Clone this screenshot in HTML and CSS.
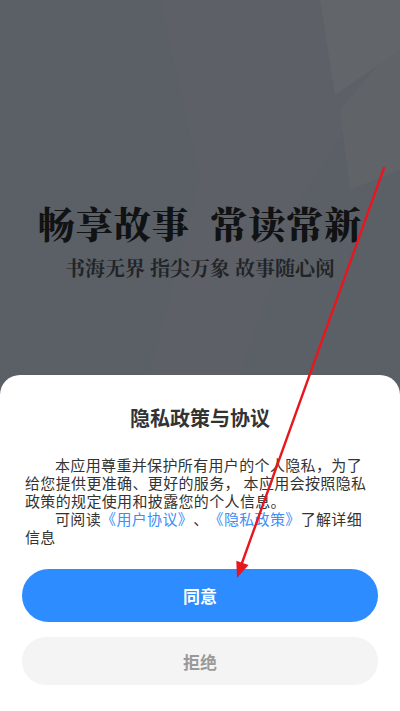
FILE: index.html
```html
<!DOCTYPE html>
<html lang="zh-CN">
<head>
<meta charset="utf-8">
<title>隐私政策与协议</title>
<link rel="stylesheet" href="styles.css">
</head>
<body>
<div class="screen">
  <section class="hero">
    <svg class="hero-bg" viewBox="0 0 400 375" preserveAspectRatio="none" aria-hidden="true">
      <polygon points="160,0 400,0 400,40 300,200 240,375 150,375 200,180" fill="#5f6267" opacity="0.6"/>
      <polygon points="320,0 400,0 400,50 335,95" fill="#65676b" opacity="0.7"/>
      <polygon points="340,110 400,40 400,170 350,190" fill="#626569" opacity="0.7"/>
    </svg>
    <h1 class="headline">畅享故事&nbsp;&nbsp;常读常新</h1>
    <p class="tagline">书海无界 指尖万象 故事随心阅</p>
  </section>
  <section class="sheet">
    <h2 class="sheet-title">隐私政策与协议</h2>
    <div class="sheet-body">
      <p class="para">本应用尊重并保护所有用户的个人隐私，为了给您提供更准确、更好的服务， 本应用会按照隐私政策的规定使用和披露您的个人信息。</p>
      <p class="para">可阅读<span class="link">《用户协议》</span>、<span class="link">《隐私政策》</span>了解详细信息</p>
    </div>
    <button class="btn btn-agree">同意</button>
    <button class="btn btn-reject">拒绝</button>
  </section>
  <svg class="annotation" viewBox="0 0 400 711" aria-hidden="true">
    <line x1="384" y1="168" x2="242" y2="563" stroke="#e8161e" stroke-width="2.4" stroke-linecap="round"/>
    <polygon points="237,578 248.5,565.1 236.3,560.7" fill="#e8161e"/>
  </svg>
</div>
</body>
</html>
```
FILE: styles.css
```css
* { box-sizing: border-box; }
html, body { margin: 0; padding: 0; }
body {
  width: 400px;
  height: 711px;
  overflow: hidden;
  font-family: "Noto Sans CJK SC", "Noto Sans", sans-serif;
  background: #ffffff;
  text-spacing-trim: space-all;
}
.screen {
  position: relative;
  width: 400px;
  height: 711px;
  display: flex;
  flex-direction: column;
  background: #5b6066;
}
.hero {
  position: relative;
  height: 395px;
  margin-bottom: -20px;
  padding-top: 200px;
  display: flex;
  flex-direction: column;
  align-items: center;
  overflow: hidden;
}
.hero-bg {
  position: absolute;
  left: 0; top: 0;
  width: 400px; height: 375px;
}
.headline {
  position: relative;
  margin: 0;
  font-family: "Noto Serif CJK SC", "Noto Sans CJK SC", serif;
  font-size: 37px;
  line-height: 46px;
  font-weight: 900;
  color: #111213;
  letter-spacing: 1px;
  white-space: nowrap;
}
.tagline {
  position: relative;
  margin: 9px 0 0;
  font-family: "Noto Serif CJK SC", "Noto Sans CJK SC", serif;
  font-size: 20px;
  line-height: 26px;
  font-weight: 700;
  color: #222427;
  white-space: nowrap;
}
.sheet {
  position: relative;
  flex: 1;
  background: #ffffff;
  border-radius: 20px 20px 0 0;
  padding: 29px 22px 0;
  display: flex;
  flex-direction: column;
}
.sheet-title {
  margin: 0;
  text-align: center;
  font-size: 20px;
  line-height: 28px;
  font-weight: 700;
  color: #333333;
}
.sheet-body {
  margin: 24px 3px 0;
  font-size: 15px;
  line-height: 18px;
  letter-spacing: 0.35px;
  color: #333333;
  text-spacing-trim: space-all;
}
.para {
  margin: 0;
  text-indent: 30px;
}
.link { color: #3d8ef7; }
.btn {
  display: block;
  width: 356px;
  border: none;
  border-radius: 27px;
  font-family: "Noto Sans CJK SC", "Noto Sans", sans-serif;
  font-size: 17px;
  font-weight: 700;
  padding: 0;
}
.btn-agree {
  margin-top: 23px;
  height: 53px;
  background: #2d8cff;
  color: #ffffff;
}
.btn-reject {
  margin-top: 15px;
  height: 48px;
  background: #f4f4f4;
  color: #9a9a9a;
}
.annotation {
  position: absolute;
  left: 0; top: 0;
  width: 400px; height: 711px;
  pointer-events: none;
}
```
